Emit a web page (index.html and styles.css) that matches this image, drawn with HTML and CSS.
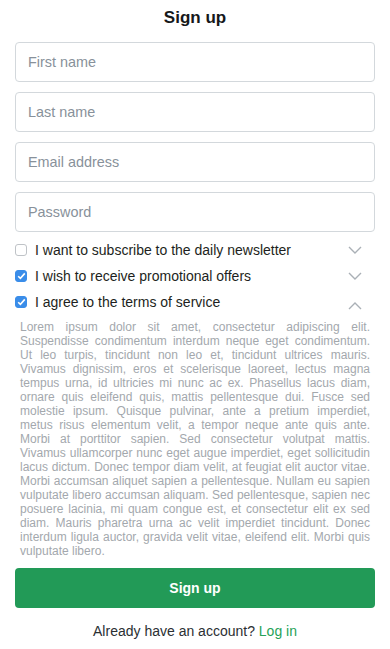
FILE: index.html
```html
<!DOCTYPE html>
<html lang="en">
<head>
<meta charset="utf-8">
<title>Sign up</title>
<link rel="stylesheet" href="styles.css">
</head>
<body>
<main class="page">
  <h1 class="title">Sign up</h1>
  <form class="form">
    <div class="fields">
      <input class="field" type="text" placeholder="First name">
      <input class="field" type="text" placeholder="Last name">
      <input class="field" type="email" placeholder="Email address">
      <input class="field" type="password" placeholder="Password">
    </div>
    <div class="options">
      <div class="option">
        <span class="box"></span>
        <span class="label">I want to subscribe to the daily newsletter</span>
        <svg class="chev" width="14" height="8" viewBox="0 0 14 8"><path d="M1 1 L7 7 L13 1" fill="none" stroke="#aab0b6" stroke-width="1.4"/></svg>
      </div>
      <div class="option">
        <span class="box checked"><svg width="9" height="8" viewBox="0 0 9 8"><path d="M1.2 4.2 L3.4 6.4 L7.8 1.4" fill="none" stroke="#fff" stroke-width="1.6"/></svg></span>
        <span class="label">I wish to receive promotional offers</span>
        <svg class="chev" width="14" height="8" viewBox="0 0 14 8"><path d="M1 1 L7 7 L13 1" fill="none" stroke="#aab0b6" stroke-width="1.4"/></svg>
      </div>
      <div class="option">
        <span class="box checked"><svg width="9" height="8" viewBox="0 0 9 8"><path d="M1.2 4.2 L3.4 6.4 L7.8 1.4" fill="none" stroke="#fff" stroke-width="1.6"/></svg></span>
        <span class="label">I agree to the terms of service</span>
        <svg class="chev up" width="14" height="8" viewBox="0 0 14 8"><path d="M1 7 L7 1 L13 7" fill="none" stroke="#aab0b6" stroke-width="1.4"/></svg>
      </div>
    </div>
    <p class="terms">Lorem ipsum dolor sit amet, consectetur adipiscing elit. Suspendisse condimentum interdum neque eget condimentum. Ut leo turpis, tincidunt non leo et, tincidunt ultrices mauris. Vivamus dignissim, eros et scelerisque laoreet, lectus magna tempus urna, id ultricies mi nunc ac ex. Phasellus lacus diam, ornare quis eleifend quis, mattis pellentesque dui. Fusce sed molestie ipsum. Quisque pulvinar, ante a pretium imperdiet, metus risus elementum velit, a tempor neque ante quis ante. Morbi at porttitor sapien. Sed consectetur volutpat mattis. Vivamus ullamcorper nunc eget augue imperdiet, eget sollicitudin lacus dictum. Donec tempor diam velit, at feugiat elit auctor vitae. Morbi accumsan aliquet sapien a pellentesque. Nullam eu sapien vulputate libero accumsan aliquam. Sed pellentesque, sapien nec posuere lacinia, mi quam congue est, et consectetur elit ex sed diam. Mauris pharetra urna ac velit imperdiet tincidunt. Donec interdum ligula auctor, gravida velit vitae, eleifend elit. Morbi quis vulputate libero.</p>
    <button class="submit" type="button">Sign up</button>
  </form>
  <p class="footer">Already have an account? <a class="login" href="#">Log in</a></p>
</main>
</body>
</html>
```
FILE: styles.css
```css
html, body {
  margin: 0;
  padding: 0;
  background: #fff;
}
body {
  font-family: "Liberation Sans", Arial, sans-serif;
  color: #212529;
}
.page {
  padding: 0 15px;
}
.title {
  margin: 0;
  padding: 8px 0 14px;
  font-size: 17px;
  line-height: 20px;
  font-weight: bold;
  text-align: center;
  color: #16181a;
}
.form {
  display: flex;
  flex-direction: column;
}
.fields {
  display: flex;
  flex-direction: column;
  gap: 10px;
}
.field {
  box-sizing: border-box;
  height: 40px;
  width: 100%;
  margin: 0;
  padding: 0 12px;
  border: 1px solid #d3d8dc;
  border-radius: 4px;
  font-family: inherit;
  font-size: 14.4px;
  color: #212529;
  background: #fff;
}
.field::placeholder {
  color: #88919a;
}
.options {
  margin-top: 5px;
  display: flex;
  flex-direction: column;
}
.option {
  height: 26px;
  display: flex;
  align-items: center;
}
.box {
  box-sizing: border-box;
  width: 12px;
  height: 12px;
  border: 1px solid #bfc3c7;
  border-radius: 3px;
  background: #fff;
  display: flex;
  align-items: center;
  justify-content: center;
  flex: none;
}
.box.checked {
  background: #3a8de9;
  border-color: #3a8de9;
}
.label {
  margin-left: 8px;
  font-size: 14px;
  color: #1d1f21;
  flex: 1;
}
.chev {
  margin-right: 13px;
  flex: none;
}
.chev.up {
  margin-top: 7px;
}
.terms {
  margin: 5px 0 0;
  padding: 0 5px;
  font-size: 12px;
  line-height: 14px;
  text-align: justify;
  color: #a3a8ad;
}
.submit {
  margin-top: 10px;
  height: 40px;
  border: none;
  border-radius: 4px;
  background: #229a57;
  color: #fff;
  font-family: inherit;
  font-size: 14px;
  font-weight: bold;
}
.footer {
  margin: 14px 0 0;
  font-size: 14px;
  line-height: 18px;
  text-align: center;
  color: #2b2f33;
}
.login {
  color: #26a258;
  text-decoration: none;
}
```
